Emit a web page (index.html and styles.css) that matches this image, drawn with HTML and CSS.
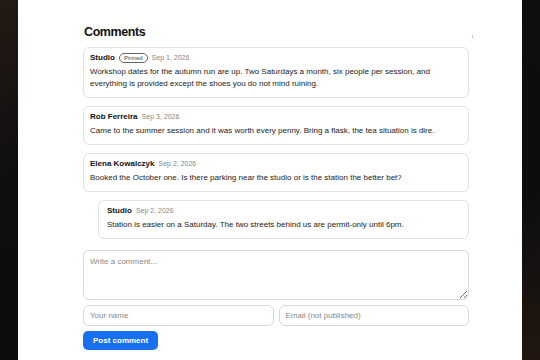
FILE: index.html
```html
<!DOCTYPE html>
<html lang="en">
<head>
    <meta charset="UTF-8">
    <meta name="viewport" content="width=device-width, initial-scale=1.0">
    <title>Comments</title>
    <link rel="stylesheet" href="styles.css">
</head>
<body>

<!-- Page Panel -->
<main class="panel">
    <section class="comments">
        <div class="comments-head">
            <h2>Comments</h2>
            <span class="tick"></span>
        </div>

        <!-- Comment List -->
        <div class="comment">
            <div class="meta">
                <span class="author">Studio</span>
                <span class="badge">Pinned</span>
                <span class="date">Sep 1, 2026</span>
            </div>
            <p>Workshop dates for the autumn run are up. Two Saturdays a month, six people per session, and everything is provided except the shoes you do not mind ruining.</p>
        </div>

        <div class="comment">
            <div class="meta">
                <span class="author">Rob Ferreira</span>
                <span class="date">Sep 3, 2026</span>
            </div>
            <p>Came to the summer session and it was worth every penny. Bring a flask, the tea situation is dire.</p>
        </div>

        <div class="comment">
            <div class="meta">
                <span class="author">Elena Kowalczyk</span>
                <span class="date">Sep 2, 2026</span>
            </div>
            <p>Booked the October one. Is there parking near the studio or is the station the better bet?</p>
        </div>

        <div class="comment reply">
            <div class="meta">
                <span class="author">Studio</span>
                <span class="date">Sep 2, 2026</span>
            </div>
            <p>Station is easier on a Saturday. The two streets behind us are permit-only until 6pm.</p>
        </div>

        <!-- Comment Form -->
        <form class="comment-form">
            <textarea placeholder="Write a comment..."></textarea>
            <div class="form-row">
                <input type="text" placeholder="Your name">
                <input type="email" placeholder="Email (not published)">
            </div>
            <button type="button">Post comment</button>
        </form>
    </section>
</main>

</body>
</html>
```
FILE: styles.css
```css
html, body {
    height: 100%;
    margin: 0;
    padding: 0;
}

body {
    font-family: "Liberation Sans", Arial, sans-serif;
    color: #111;
    background: linear-gradient(160deg, #241a14 0%, #0e0d0f 35%, #0d0d10 70%, #21170f 100%);
    display: flex;
    justify-content: center;
    overflow: hidden;
}

/* White page panel */
.panel {
    width: 504px;
    background: #fff;
    padding: 25px 0 0 65px;
    box-sizing: border-box;
}

.comments {
    width: 386px;
}

.comments-head {
    display: flex;
    justify-content: space-between;
    align-items: flex-end;
    margin-bottom: 7px;
}

.comments-head h2 {
    font-size: 12.5px;
    letter-spacing: -0.4px;
    margin: 0 0 0 1px;
    line-height: 15px;
}

.tick {
    width: 1px;
    height: 3px;
    background: #b9c8e0;
    margin-right: -4px;
    margin-bottom: 2px;
}

/* Comment cards */
.comment {
    border: 1px solid #e2e2e2;
    border-radius: 6px;
    padding: 4px 6px 7px 6px;
    margin-bottom: 8px;
}

.comment.reply {
    margin-left: 15px;
    padding-left: 8px;
}

.meta {
    display: flex;
    align-items: center;
    gap: 4px;
    margin-bottom: 2px;
    line-height: 12px;
}

.author {
    font-weight: bold;
    font-size: 8px;
}

.date {
    font-size: 7px;
    color: #888;
}

.badge {
    font-size: 6px;
    color: #444;
    border: 1px solid #666;
    border-radius: 8px;
    padding: 0 4px;
    line-height: 8px;
}

.comment p {
    margin: 0;
    font-size: 8px;
    line-height: 12px;
    color: #222;
}

/* Comment form */
.comment-form {
    margin-top: 11px;
}

.comment-form textarea,
.comment-form input {
    font-family: "Liberation Sans", Arial, sans-serif;
    font-size: 8px;
    border: 1px solid #d8d8d8;
    border-radius: 6px;
    padding: 6px 6px;
    box-sizing: border-box;
    width: 100%;
    color: #222;
}

.comment-form textarea {
    height: 50px;
    resize: vertical;
    display: block;
}

.comment-form ::placeholder {
    color: #888;
}

.form-row {
    display: flex;
    gap: 5px;
    margin-top: 5px;
}

.comment-form input {
    height: 21px;
}

.comment-form button {
    margin-top: 5px;
    background: #1670f0;
    color: #fff;
    border: none;
    border-radius: 5px;
    font-family: "Liberation Sans", Arial, sans-serif;
    font-weight: bold;
    font-size: 8px;
    padding: 0 10px;
    height: 19px;
    cursor: pointer;
}
```
